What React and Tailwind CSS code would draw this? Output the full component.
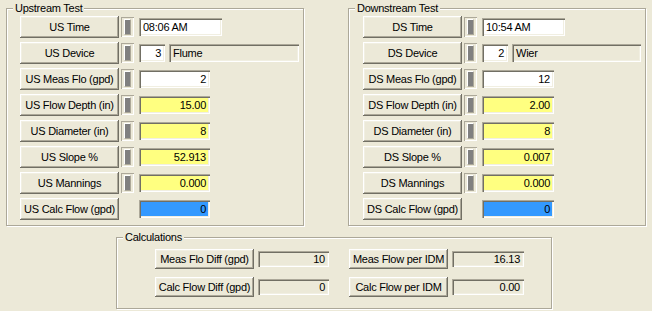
import React from "react";

const BTN =
  "flex items-center justify-center bg-[#ece9d8] text-black shadow-[inset_-1px_-1px_0_#716f64,inset_1px_1px_0_#ffffff,inset_-2px_-2px_0_#aca899,inset_2px_2px_0_#f1efe2] whitespace-nowrap";
const SUNK =
  "shadow-[inset_1px_1px_0_#aca899,inset_2px_2px_0_#716f64,inset_-1px_-1px_0_#ffffff,inset_-2px_-2px_0_#f1efe2]";

function Field({ w, bg, align, children }) {
  return (
    <div
      className={`${w} ${bg} ${SUNK} h-[18px] flex items-center ${
        align === "left" ? "justify-start pl-[4px]" : "justify-end pr-[4px]"
      } whitespace-nowrap overflow-hidden`}
    >
      {children}
    </div>
  );
}

function Slider() {
  return (
    <div className="w-[13px] h-[20px] flex items-stretch justify-center py-[2px] shadow-[inset_1px_1px_0_#aca899,inset_-1px_-1px_0_#ffffff] bg-[#ece9d8]">
      <div className="w-[7px] bg-[#808080] border-l border-t border-l-[#ffffff] border-t-[#ffffff] border-r border-b border-r-[#aca899] border-b-[#aca899]" />
    </div>
  );
}

function Row({ label, slider = true, children }) {
  return (
    <div className="flex items-center h-[22px]">
      <div className={`${BTN} w-[99px] h-[22px]`}>{label}</div>
      <div className="w-[15px] ml-[2px] mr-[1px] flex items-center">
        {slider ? <Slider /> : null}
      </div>
      <div className="flex items-center gap-[4px] ml-[2px]">{children}</div>
    </div>
  );
}

function Group({ title, className, children }) {
  return (
    <div
      className={`relative border border-[#aca899] shadow-[1px_1px_0_#ffffff,inset_1px_1px_0_#ffffff] ${className}`}
    >
      <div className="absolute -top-[8px] left-[6px] bg-[#ece9d8] px-[2px] leading-[14px]">
        {title}
      </div>
      {children}
    </div>
  );
}

function CalcItem({ label, value, fw }) {
  return (
    <div className="flex items-center gap-[4px]">
      <div className={`${BTN} w-[99px] h-[20px]`}>{label}</div>
      <div
        className={`${fw} h-[16px] bg-[#ece9d8] ${SUNK} flex items-center justify-end pr-[4px]`}
      >
        {value}
      </div>
    </div>
  );
}

export default function App() {
  const W = "bg-white";
  const Y = "bg-[#ffff80]";
  const B = "bg-[#3399ff]";
  const R = "bg-[#ece9d8]";
  return (
    <div
      className="w-[652px] h-[311px] bg-[#ece9d8] text-[11px] tracking-[-0.25px] text-black overflow-hidden"
      style={{ fontFamily: '"Liberation Sans", Arial, sans-serif' }}
    >
      <div className="flex pt-[8px] pl-[6px] gap-[44px]">
        <Group title="Upstream Test" className="w-[298px] h-[218px] pt-[7px] pl-[13px]">
          <div className="flex flex-col gap-[4px]">
            <Row label="US Time">
              <Field w="w-[83px]" bg={W} align="left">08:06 AM</Field>
            </Row>
            <Row label="US Device">
              <Field w="w-[26px]" bg={W}>3</Field>
              <Field w="w-[130px]" bg={R} align="left">Flume</Field>
            </Row>
            <Row label="US Meas Flo (gpd)">
              <Field w="w-[71px]" bg={W}>2</Field>
            </Row>
            <Row label="US Flow Depth (in)">
              <Field w="w-[71px]" bg={Y}>15.00</Field>
            </Row>
            <Row label="US Diameter (in)">
              <Field w="w-[71px]" bg={Y}>8</Field>
            </Row>
            <Row label="US Slope %">
              <Field w="w-[71px]" bg={Y}>52.913</Field>
            </Row>
            <Row label="US Mannings">
              <Field w="w-[71px]" bg={Y}>0.000</Field>
            </Row>
            <Row label="US Calc Flow (gpd)" slider={false}>
              <Field w="w-[71px]" bg={B}>0</Field>
            </Row>
          </div>
        </Group>
        <Group title="Downstream Test" className="w-[298px] h-[218px] pt-[7px] pl-[14px]">
          <div className="flex flex-col gap-[4px]">
            <Row label="DS Time">
              <Field w="w-[83px]" bg={W} align="left">10:54 AM</Field>
            </Row>
            <Row label="DS Device">
              <Field w="w-[26px]" bg={W}>2</Field>
              <Field w="w-[129px]" bg={R} align="left">Wier</Field>
            </Row>
            <Row label="DS Meas Flo (gpd)">
              <Field w="w-[72px]" bg={W}>12</Field>
            </Row>
            <Row label="DS Flow Depth (in)">
              <Field w="w-[72px]" bg={Y}>2.00</Field>
            </Row>
            <Row label="DS Diameter (in)">
              <Field w="w-[72px]" bg={Y}>8</Field>
            </Row>
            <Row label="DS Slope %">
              <Field w="w-[72px]" bg={Y}>0.007</Field>
            </Row>
            <Row label="DS Mannings">
              <Field w="w-[72px]" bg={Y}>0.000</Field>
            </Row>
            <Row label="DS Calc Flow (gpd)" slider={false}>
              <Field w="w-[72px]" bg={B}>0</Field>
            </Row>
          </div>
        </Group>
      </div>
      <div className="pl-[116px] mt-[11px]">
        <Group title="Calculations" className="w-[436px] h-[72px] pt-[11px] pl-[38px]">
          <div className="flex gap-[20px]">
            <div className="flex flex-col gap-[8px]">
              <CalcItem label="Meas Flo Diff (gpd)" value="10" fw="w-[71px]" />
              <CalcItem label="Calc Flow Diff (gpd)" value="0" fw="w-[71px]" />
            </div>
            <div className="flex flex-col gap-[8px]">
              <CalcItem label="Meas Flow per IDM" value="16.13" fw="w-[72px]" />
              <CalcItem label="Calc Flow per IDM" value="0.00" fw="w-[72px]" />
            </div>
          </div>
        </Group>
      </div>
    </div>
  );
}
